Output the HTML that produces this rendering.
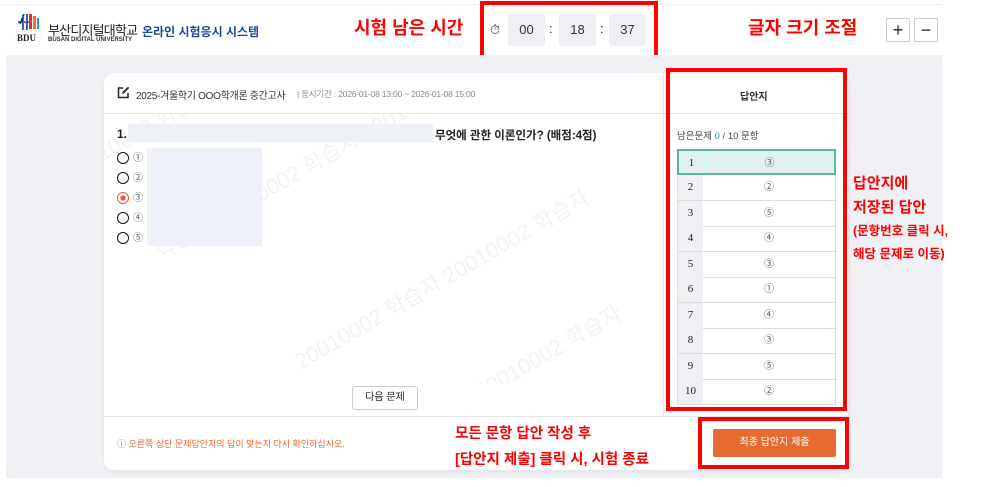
<!DOCTYPE html>
<html><head><meta charset="utf-8"><style>
*{margin:0;padding:0;box-sizing:border-box}
body{width:1003px;height:487px;background:#fff;position:relative;overflow:hidden;font-family:"Liberation Sans","Noto Sans CJK KR",sans-serif;color:#222}
.abs{position:absolute}
.red{color:#f00;font-weight:bold}
.rbox{position:absolute;border:4px solid #f00}
.tb{position:absolute;top:14px;width:37px;height:32px;background:#eef0f4;border-radius:3px;font-size:13px;text-align:center;line-height:32px;color:#333}
.wm{position:absolute;font-size:22px;color:#f3f3f3;transform:rotate(-30deg);white-space:nowrap;transform-origin:left bottom}
.row{position:absolute;left:677px;width:159px;height:26px;border-bottom:1px solid #ddd;border-left:1px solid #ddd;border-right:1px solid #ddd;font-size:11px}
.row .n{position:absolute;left:0;top:0;width:25px;height:100%;background:#eef0f4;text-align:center;line-height:25px;font-family:"Liberation Serif",serif;font-size:11px}
.row .a{position:absolute;left:25px;right:0;top:0;height:100%;text-align:center;line-height:25px;color:#555;font-size:10px}
.opt{position:absolute;left:117px;font-size:10px;color:#666}
.opt i{display:inline-block;width:12px;height:12px;border:1.5px solid #111;border-radius:50%;vertical-align:middle;margin-right:4px}
</style></head><body>
<div class="abs" style="left:0;top:4px;width:942px;height:1px;background:#eee"></div>
<!-- logo -->
<svg class="abs" style="left:14px;top:10px" width="30" height="38" viewBox="0 0 30 38">
<path d="M6 14 L10 4 M9 5 L9 20 M13 4 L13 20 M4 12 L18 12" stroke="#1a3c8a" stroke-width="1.6" fill="none"/>
<rect x="15" y="4" width="3" height="15" fill="#d9342b"/><rect x="19" y="6" width="3" height="13" fill="#e8742b"/><rect x="23" y="8" width="2" height="11" fill="#3a8dd0"/>
<circle cx="15" cy="24" r="13" fill="none" stroke="#ccc" stroke-width="0.6" stroke-dasharray="1 1.5"/>
<text x="3" y="31" font-size="9" font-weight="bold" font-family="Liberation Serif,serif" fill="#222">BDU</text>
</svg>
<div class="abs" style="left:48px;top:20px;font-size:13px;letter-spacing:-0.8px;color:#222;font-family:'Liberation Sans','Noto Sans CJK KR',sans-serif">부산디지털대학교</div>
<div class="abs" style="left:48px;top:37px;font-size:6px;font-weight:bold;color:#333">BUSAN DIGITAL UNIVERSITY</div>
<div class="abs" style="left:142px;top:23px;font-size:12px;font-weight:bold;color:#1f4a9c">온라인 시험응시 시스템</div>
<div class="abs red" style="left:354px;top:14px;font-size:18px">시험 남은 시간</div>
<div class="abs" style="left:490px;top:22px;font-size:13px;color:#333">⏱</div>
<div class="tb" style="left:508px">00</div><div class="abs" style="left:549px;top:21px;font-size:13px">:</div>
<div class="tb" style="left:559px">18</div><div class="abs" style="left:600px;top:21px;font-size:13px">:</div>
<div class="tb" style="left:609px">37</div>
<div class="rbox" style="left:480px;top:1px;width:178px;height:58px"></div>
<div class="abs red" style="left:748px;top:14px;font-size:18px">글자 크기 조절</div>
<div class="abs" style="left:886px;top:18px;width:24px;height:24px;border:1px solid #ccc;border-radius:2px;text-align:center;line-height:22px;font-size:18px">+</div>
<div class="abs" style="left:914px;top:18px;width:24px;height:24px;border:1px solid #ccc;border-radius:2px;text-align:center;line-height:22px;font-size:18px">−</div>
<!-- gray area -->
<div class="abs" style="left:6px;top:55px;width:936px;height:423px;background:#f0f1f5"></div>
<!-- card -->
<div class="abs" style="left:104px;top:73px;width:744px;height:397px;background:#fff;border-radius:10px;box-shadow:0 2px 6px rgba(0,0,0,.06);overflow:hidden">
 <div class="abs" style="left:0;top:40px;width:560px;height:1px;background:#e5e5e5"></div>
 <div class="abs" style="left:0;top:343px;width:744px;height:1px;background:#e5e5e5"></div>
 <div class="abs" style="left:559px;top:0;width:1px;height:343px;background:#e5e5e5"></div>
 <div class="abs" style="left:560px;top:40px;width:184px;height:1px;background:#e5e5e5"></div>
 <div class="abs" style="left:0;top:41px;width:559px;height:270px;overflow:hidden">
 <div class="wm" style="left:60px;top:120px">학습자 20010002 학습자 20010002</div>
 <div class="wm" style="left:200px;top:230px">20010002 학습자 20010002 학습자</div>
 <div class="wm" style="left:380px;top:260px">20010002 학습자</div>
 <div class="wm" style="left:-30px;top:40px">20010002 학습자 20010002</div>
 </div>
</div>
<svg class="abs" style="left:117px;top:86px" width="13" height="13" viewBox="0 0 13 13"><path d="M6 2H1.5V11.5H11V7" stroke="#222" stroke-width="1.5" fill="none"/><path d="M5 8L5.5 6 11 0.8 12.2 2 6.8 7.5Z" fill="#222"/></svg>
<div class="abs" style="left:136px;top:87px;font-size:10px;letter-spacing:-0.3px;color:#333">2025-겨울학기 OOO학개론 중간고사</div>
<div class="abs" style="left:297px;top:88px;font-size:8.5px;color:#888;letter-spacing:-0.2px">| 응시기간 : 2026-01-08 13:00 ~ 2026-01-08 15:00</div>
<div class="abs" style="left:117px;top:127px;font-size:12px;font-weight:bold">1.</div>
<div class="abs" style="left:128px;top:124px;width:305px;height:18px;background:#eef1f8"></div>
<div class="abs" style="left:435px;top:127px;font-size:11.5px;font-weight:bold">무엇에 관한 이론인가? (배점:4점)</div>
<div class="abs" style="left:147px;top:148px;width:115px;height:98px;background:#eef1f8"></div>
<div class="opt" style="top:149px"><i></i>①</div>
<div class="opt" style="top:169px"><i></i>②</div>
<div class="opt" style="top:189px"><i style="border-color:#f0573e;background:radial-gradient(#f0573e 35%,#fff 40%)"></i>③</div>
<div class="opt" style="top:209px"><i></i>④</div>
<div class="opt" style="top:229px"><i></i>⑤</div>
<div class="abs" style="left:352px;top:386px;width:66px;height:24px;border:1px solid #ccc;border-radius:3px;background:#fff;font-size:10px;text-align:center;line-height:22px">다음 문제</div>
<div class="abs" style="left:117px;top:437px;font-size:9px;color:#e8692f">ⓘ 오른쪽 상단 문제답안지의 답이 맞는지 다시 확인하십시오.</div>
<!-- answer sheet -->
<div class="abs" style="left:740px;top:88px;font-size:10px;font-weight:bold;color:#333">답안지</div>
<div class="abs" style="left:677px;top:128px;font-size:9.5px;color:#444">남은문제 <span style="color:#2aa0c8">0</span> / 10 문항</div>
<div class="row" style="top:149px;height:26px;border:2px solid #5ab5a5;background:#e0f0ef"><div class="n" style="background:transparent">1</div><div class="a" style="border-left:1px solid #cfe">③</div></div>
<div class="row" style="top:175px"><div class="n">2</div><div class="a">②</div></div>
<div class="row" style="top:201px"><div class="n">3</div><div class="a">⑤</div></div>
<div class="row" style="top:226px"><div class="n">4</div><div class="a">④</div></div>
<div class="row" style="top:252px"><div class="n">5</div><div class="a">③</div></div>
<div class="row" style="top:277px"><div class="n">6</div><div class="a">①</div></div>
<div class="row" style="top:303px"><div class="n">7</div><div class="a">④</div></div>
<div class="row" style="top:328px"><div class="n">8</div><div class="a">③</div></div>
<div class="row" style="top:354px"><div class="n">9</div><div class="a">⑤</div></div>
<div class="row" style="top:379px"><div class="n">10</div><div class="a">②</div></div>
<div class="rbox" style="left:666px;top:68px;width:181px;height:343px"></div>
<div class="abs red" style="left:853px;top:172px;font-size:15px;line-height:24px">답안지에<br>저장된 답안</div>
<div class="abs red" style="left:853px;top:220px;font-size:12.5px;line-height:23px">(문항번호 클릭 시,<br>해당 문제로 이동)</div>
<div class="abs" style="left:713px;top:429px;width:123px;height:28px;background:#e66b33;border-radius:2px;color:#fff;font-size:10px;text-align:center;line-height:28px">최종 답안지 제출</div>
<div class="rbox" style="left:698px;top:417px;width:151px;height:52px"></div>
<div class="abs red" style="left:455px;top:421px;font-size:14.5px;line-height:26px">모든 문항 답안 작성 후<br>[답안지 제출] 클릭 시, 시험 종료</div>
</body></html>
